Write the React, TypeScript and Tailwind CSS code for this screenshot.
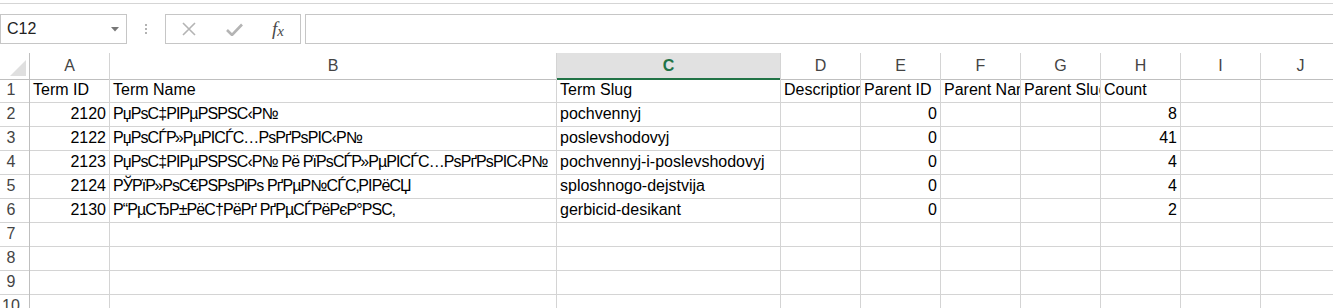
import React from 'react';

const cols = ['A', 'B', 'C', 'D', 'E', 'F', 'G', 'H', 'I', 'J'];

type Cell = { v: string; num?: boolean; cyr?: boolean };

const rows: Cell[][] = [
    [{ v: 'Term ID' }, { v: 'Term Name' }, { v: 'Term Slug' }, { v: 'Description' }, { v: 'Parent ID' }, { v: 'Parent Name' }, { v: 'Parent Slug' }, { v: 'Count' }],
    [{ v: '2120', num: true }, { v: 'РџРѕС‡РІРµРЅРЅС‹Р№', cyr: true }, { v: 'pochvennyj' }, { v: '' }, { v: '0', num: true }, { v: '' }, { v: '' }, { v: '8', num: true }],
    [{ v: '2122', num: true }, { v: 'РџРѕСЃР»РµРІСЃС…РѕРґРѕРІС‹Р№', cyr: true }, { v: 'poslevshodovyj' }, { v: '' }, { v: '0', num: true }, { v: '' }, { v: '' }, { v: '41', num: true }],
    [{ v: '2123', num: true }, { v: 'РџРѕС‡РІРµРЅРЅС‹Р№ Рё РїРѕСЃР»РµРІСЃС…РѕРґРѕРІС‹Р№', cyr: true }, { v: 'pochvennyj-i-poslevshodovyj' }, { v: '' }, { v: '0', num: true }, { v: '' }, { v: '' }, { v: '4', num: true }],
    [{ v: '2124', num: true }, { v: 'РЎРїР»РѕС€РЅРѕРіРѕ РґРµР№СЃС‚РІРёСЏ', cyr: true }, { v: 'sploshnogo-dejstvija' }, { v: '' }, { v: '0', num: true }, { v: '' }, { v: '' }, { v: '4', num: true }],
    [{ v: '2130', num: true }, { v: 'Р“РµСЂР±РёС†РёРґ РґРµСЃРёРєР°РЅС‚', cyr: true }, { v: 'gerbicid-desikant' }, { v: '' }, { v: '0', num: true }, { v: '' }, { v: '' }, { v: '2', num: true }],
    [], [], [], [],
];

const gridCols = 'grid grid-cols-[30px_80px_447px_224px_80px_80px_80px_80px_80px_80px_80px]';

export default function App() {
    return (
        <div className="w-[1333px] h-[308px] overflow-hidden bg-white text-black" style={{ fontFamily: '"Liberation Sans", Arial, sans-serif' }}>
            {/* top edge of ribbon */}
            <div className="h-[4px] border-b border-[#d5d5d5]" />

            {/* name box + formula bar */}
            <div className="flex items-start pt-[10px] pb-[9px]">
                <div className="w-[127px] h-[30px] border border-[#c6c6c6] flex items-center justify-between pl-[6px] pr-[7px] text-[16px] text-[#222]">
                    <span>C12</span>
                    <svg width="8" height="5" viewBox="0 0 8 5"><path d="M0 0h8L4 4.5z" fill="#777" /></svg>
                </div>
                <div className="w-[38px] h-[30px] flex flex-col items-center justify-center gap-[2px]">
                    <span className="w-[2px] h-[2px] bg-[#b3b3b3]" />
                    <span className="w-[2px] h-[2px] bg-[#b3b3b3]" />
                    <span className="w-[2px] h-[2px] bg-[#b3b3b3]" />
                </div>
                <div className="w-[136px] h-[30px] border border-[#c6c6c6] flex items-center">
                    <div className="w-[44px] flex justify-center pl-[1px]">
                        <svg width="14" height="14" viewBox="0 0 14 14"><path d="M1 1l12 12M13 1L1 13" stroke="#b4b4b4" strokeWidth="1.6" /></svg>
                    </div>
                    <div className="w-[48px] flex justify-center">
                        <svg width="17" height="13" viewBox="0 0 17 13"><path d="M1 7l5 5L16 1.5" stroke="#b4b4b4" strokeWidth="2.6" fill="none" /></svg>
                    </div>
                    <div className="w-[40px] flex justify-center items-baseline italic text-[#4a4a4a]" style={{ fontFamily: '"Liberation Serif", serif' }}>
                        <span className="text-[19px]">f</span><span className="text-[15px] relative top-[1px]">x</span>
                    </div>
                </div>
                <div className="w-[4px]" />
                <div className="flex-1 h-[30px] border-y border-l border-[#c6c6c6]" />
            </div>

            {/* column headers */}
            <div className={`${gridCols} h-[25px] text-[16px] text-[#444]`}>
                <div className="relative border-r border-b border-[#bfbfbf]">
                    <svg className="absolute right-[3px] bottom-[3px]" width="16" height="16" viewBox="0 0 16 16"><path d="M16 0V16H0z" fill="#dfdfdf" /></svg>
                </div>
                {cols.map(c => (
                    <div key={c} className={`flex items-center justify-center border-r border-[#d4d4d4] ${c === 'C' ? 'bg-[#e1e1e1] border-b-2 border-b-[#217346] text-[#217346] font-bold pt-[1px]' : 'border-b border-b-[#bfbfbf]'}`}>
                        {c}
                    </div>
                ))}
            </div>

            {/* rows */}
            {rows.map((r, i) => (
                <div key={i} className={`${gridCols} h-[24px] text-[16px]`}>
                    <div className="flex items-center justify-center pr-[7px] border-r border-r-[#bfbfbf] border-b border-b-[#d4d4d4] text-[#444]">
                        {i + 1}
                    </div>
                    {cols.map((c, j) => {
                        const cell = r[j];
                        return (
                            <div key={c} className={`flex items-center overflow-hidden whitespace-nowrap border-r border-b border-[#d4d4d4] ${cell?.num ? 'justify-end pr-[3px]' : 'pl-[3px]'} ${cell?.cyr ? 'tracking-[-0.9px]' : ''}`}>
                                {cell?.v}
                            </div>
                        );
                    })}
                </div>
            ))}
        </div>
    );
}
